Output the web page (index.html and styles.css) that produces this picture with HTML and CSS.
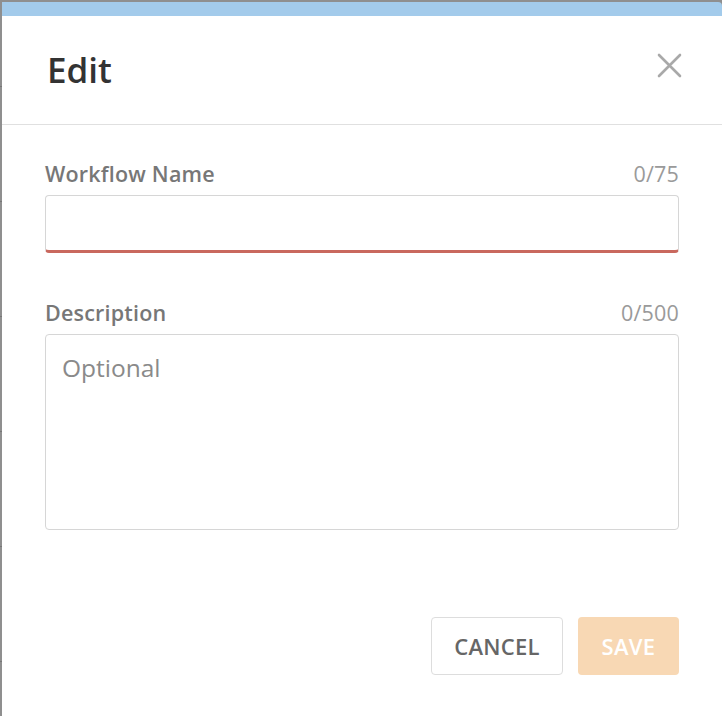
FILE: index.html
```html
<!DOCTYPE html>
<html>
<head>
<meta charset="utf-8">
<link rel="stylesheet" href="styles.css">
</head>
<body>
<div class="modal">
  <div class="modal-header">
    <h1 class="title">Edit</h1>
    <button class="close" aria-label="Close">
      <svg width="25" height="25" viewBox="0 0 25 25"><path d="M2 2 L23 23 M23 2 L2 23" stroke="#a9a9a9" stroke-width="2.6" stroke-linecap="round" fill="none"/></svg>
    </button>
  </div>
  <div class="modal-body">
    <div class="field">
      <div class="label-row"><span class="label">Workflow Name</span><span class="count">0/75</span></div>
      <div class="input invalid"></div>
    </div>
    <div class="field">
      <div class="label-row"><span class="label">Description</span><span class="count">0/500</span></div>
      <div class="textarea"><span class="placeholder">Optional</span></div>
    </div>
  </div>
  <div class="modal-footer">
    <button class="btn btn-cancel">CANCEL</button>
    <button class="btn btn-save">SAVE</button>
  </div>
</div>
</body>
</html>
```
FILE: styles.css
```css
html, body {
  margin: 0;
  padding: 0;
  height: 100%;
  overflow: hidden;
}
body {
  background-color: #8f8f8f;
  background-image: repeating-linear-gradient(to bottom, transparent 0, transparent 86px, #777 86px, #777 87px, transparent 87px, transparent 115px);
  background-size: 2px 100%;
  background-repeat: no-repeat;
  font-family: "Open Sans", "Liberation Sans", sans-serif;
  padding: 2px 0 0 2px;
  box-sizing: border-box;
}
.modal {
  width: 720px;
  height: 716px;
  background: #fff;
  border-top: 14px solid #a3cbeb;
  border-top-right-radius: 4px;
  box-sizing: border-box;
}
.modal-header {
  height: 109px;
  border-bottom: 1px solid #e0e0e0;
  box-sizing: border-box;
  display: flex;
  align-items: center;
  justify-content: space-between;
  padding: 0 40px 0 45px;
}
.title {
  margin: 0;
  font-size: 35px;
  line-height: 40px;
  font-weight: 600;
  color: #333;
}
.close {
  border: 0;
  background: none;
  padding: 0;
  width: 25px;
  height: 25px;
  display: flex;
  cursor: pointer;
  margin-bottom: 10px;
}
.modal-body {
  padding: 35px 43px 0 43px;
  display: flex;
  flex-direction: column;
  gap: 46px;
}
.field {
  display: flex;
  flex-direction: column;
  gap: 7px;
}
.label-row {
  display: flex;
  justify-content: space-between;
  align-items: baseline;
  font-size: 21.5px;
  line-height: 28px;
  letter-spacing: 0.2px;
}
.label {
  font-weight: 600;
  color: #777;
}
.count {
  color: #9a9a9a;
}
.input {
  height: 58px;
  border: 1px solid #d6d6d6;
  border-radius: 4px;
  box-sizing: border-box;
}
.input.invalid {
  border-bottom: 3px solid #c9685e;
}
.textarea {
  height: 196px;
  border: 1px solid #d6d6d6;
  border-radius: 4px;
  box-sizing: border-box;
  padding: 16px 16px;
}
.placeholder {
  font-size: 24.5px;
  color: #8a8a8a;
  line-height: 34px;
}
.modal-footer {
  display: flex;
  justify-content: flex-end;
  gap: 15px;
  padding: 87px 43px 0 43px;
}
.btn {
  height: 58px;
  border-radius: 4px;
  font-family: "Open Sans", "Liberation Sans", sans-serif;
  font-size: 22px;
  font-weight: 600;
  letter-spacing: 0.3px;
  box-sizing: border-box;
  cursor: pointer;
  padding: 0;
}
.btn-cancel {
  width: 132px;
  background: #fff;
  border: 1px solid #ddd;
  color: #666;
}
.btn-save {
  width: 101px;
  background: #f8d8b4;
  border: 0;
  color: #fff;
}
```
